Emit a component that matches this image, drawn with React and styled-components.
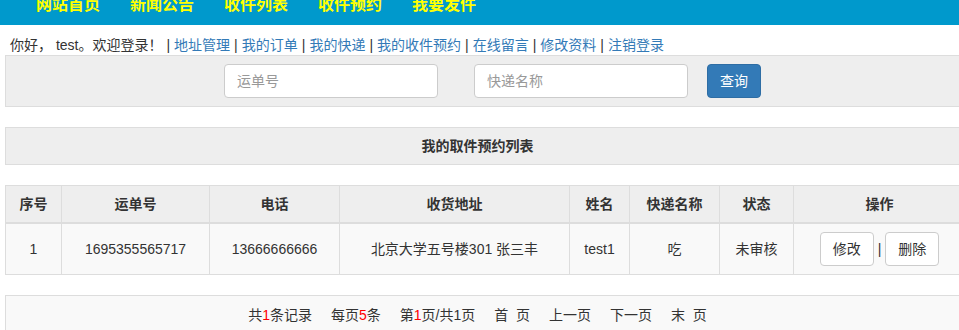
import styled, { createGlobalStyle } from 'styled-components';

const GlobalStyle = createGlobalStyle`
    html, body {
        margin: 0;
        padding: 0;
        overflow: hidden;
        background: #fff;
    }
    body {
        font-family: "Liberation Sans", "Noto Sans CJK SC", sans-serif;
        font-size: 14px;
        color: #333;
    }
`;

const Header = styled.div`
    height: 25px;
    background: #0099cc;
    overflow: hidden;
`;

const Nav = styled.ul`
    display: flex;
    margin: -3px 0 0;
    padding: 0 0 0 21px;
    list-style: none;
`;

const NavItem = styled.li`
    padding: 0 15px;
    font-size: 16px;
    line-height: 16px;
    font-weight: bold;
    color: #ffff00;
    white-space: nowrap;
`;

const Welcome = styled.div`
    height: 30px;
    padding: 10px 0 0 10px;
    box-sizing: border-box;
    line-height: 20px;
    white-space: nowrap;
`;

const Link = styled.a`
    color: #337ab7;
    text-decoration: none;
`;

const Sep = styled.span`
    color: #333;
    margin: 0 4px;
`;

const Content = styled.div`
    margin-left: 5px;
    width: 960px;
    display: flex;
    flex-direction: column;
    gap: 20px;
`;

const Panel = styled.div`
    border: 1px solid #ddd;
    background: ${(p) => p.$bg || '#eee'};
`;

const SearchForm = styled(Panel)`
    display: flex;
    justify-content: center;
    align-items: center;
    padding: 8px 0 8px 15px;
`;

const Input = styled.input`
    width: 214px;
    height: 34px;
    box-sizing: border-box;
    padding: 6px 12px;
    border: 1px solid #ccc;
    border-radius: 4px;
    font-family: inherit;
    font-size: 14px;
    color: #555;
    background: #fff;
    margin-right: ${(p) => p.$gap}px;
    &::placeholder {
        color: #999;
    }
`;

const Button = styled.button`
    height: 34px;
    box-sizing: border-box;
    padding: 6px 12px;
    border-radius: 4px;
    font-family: inherit;
    font-size: 14px;
    line-height: 20px;
    cursor: pointer;
    border: 1px solid ${(p) => (p.$primary ? '#2e6da4' : '#ccc')};
    background: ${(p) => (p.$primary ? '#337ab7' : '#fff')};
    color: ${(p) => (p.$primary ? '#fff' : '#333')};
`;

const Title = styled(Panel)`
    padding: 8px 15px 8px 0;
    line-height: 20px;
    text-align: center;
    font-weight: bold;
`;

const Table = styled.table`
    width: 960px;
    table-layout: fixed;
    border-collapse: collapse;
    text-align: center;
`;

const Th = styled.th`
    background: #eee;
    border: 1px solid #ddd;
    border-bottom-width: 2px;
    padding: 8px;
    line-height: 20px;
    font-weight: bold;
`;

const Td = styled.td`
    background: #f9f9f9;
    border: 1px solid #ddd;
    padding: 8px;
    line-height: 20px;
    white-space: nowrap;
`;

const Actions = styled.div`
    display: flex;
    justify-content: center;
    align-items: center;
    gap: 4px;
`;

const Pager = styled(Panel)`
    display: flex;
    justify-content: center;
    gap: 19px;
    padding: 9px 15px 9px 0;
    line-height: 20px;
    white-space: nowrap;
`;

const Red = styled.span`
    color: #f00;
`;

const navItems = ['网站首页', '新闻公告', '收件列表', '收件预约', '我要发件'];
const links = ['地址管理', '我的订单', '我的快递', '我的收件预约', '在线留言', '修改资料', '注销登录'];
const columns = [
    ['序号', 56],
    ['运单号', 148],
    ['电话', 130],
    ['收货地址', 230],
    ['姓名', 60],
    ['快递名称', 90],
    ['状态', 74],
    ['操作', 172],
];
const rows = [
    { id: 1, no: '1695355565717', phone: '13666666666', address: '北京大学五号楼301 张三丰', name: 'test1', express: '吃', status: '未审核' },
];

function App() {
    return (
        <>
            <GlobalStyle />
            <Header>
                <Nav>
                    {navItems.map((item) => (
                        <NavItem key={item}>{item}</NavItem>
                    ))}
                </Nav>
            </Header>
            <Welcome>
                你好， test。欢迎登录！ 
                {links.map((link) => (
                    <span key={link}>
                        <Sep>|</Sep>
                        <Link href="#">{link}</Link>
                    </span>
                ))}
            </Welcome>
            <Content>
                <SearchForm>
                    <Input placeholder="运单号" $gap={36} />
                    <Input placeholder="快递名称" $gap={19} />
                    <Button $primary>查询</Button>
                </SearchForm>
                <Title>我的取件预约列表</Title>
                <Table>
                    <colgroup>
                        {columns.map(([name, w]) => (
                            <col key={name} style={{ width: w }} />
                        ))}
                    </colgroup>
                    <thead>
                        <tr>
                            {columns.map(([name]) => (
                                <Th key={name}>{name}</Th>
                            ))}
                        </tr>
                    </thead>
                    <tbody>
                        {rows.map((r) => (
                            <tr key={r.id}>
                                <Td>{r.id}</Td>
                                <Td>{r.no}</Td>
                                <Td>{r.phone}</Td>
                                <Td>{r.address}</Td>
                                <Td>{r.name}</Td>
                                <Td>{r.express}</Td>
                                <Td>{r.status}</Td>
                                <Td>
                                    <Actions>
                                        <Button>修改</Button>
                                        <span>|</span>
                                        <Button>删除</Button>
                                    </Actions>
                                </Td>
                            </tr>
                        ))}
                    </tbody>
                </Table>
                <Pager $bg="#f9f9f9">
                    <span>共<Red>1</Red>条记录</span>
                    <span>每页<Red>5</Red>条</span>
                    <span>第<Red>1</Red>页/共1页</span>
                    <span>首&nbsp;&nbsp;页</span>
                    <span>上一页</span>
                    <span>下一页</span>
                    <span>末&nbsp;&nbsp;页</span>
                </Pager>
            </Content>
        </>
    );
}

export default App;
